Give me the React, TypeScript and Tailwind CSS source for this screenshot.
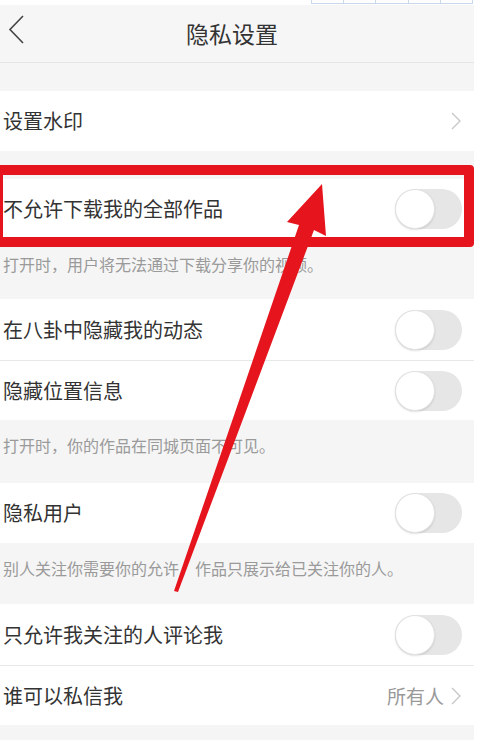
import React from "react";

function Toggle() {
  return (
    <div className="relative w-[67px] h-[40px] rounded-full bg-[#e6e6e6] shrink-0">
      <div className="absolute left-0 top-0 w-[40px] h-[40px] rounded-full bg-white border border-[#e2e2e2] shadow-[0_1px_2px_rgba(0,0,0,0.12)]" />
    </div>
  );
}

function Chevron() {
  return (
    <svg width="12" height="20" viewBox="0 0 12 20" className="shrink-0">
      <path d="M2 2 L10 10 L2 18" fill="none" stroke="#c8c8c8" strokeWidth="1.4" />
    </svg>
  );
}

function Row({
  label,
  right,
  divider,
  h = "h-[60px]",
}: {
  label: string;
  right: React.ReactNode;
  divider?: boolean;
  h?: string;
}) {
  return (
    <div className={`bg-white ${h} pl-[3px] pr-[12px] flex items-center justify-between ${divider ? "border-b border-[#e8e8e8]" : ""}`}>
      <span className="text-[20px] text-[#333] leading-none">{label}</span>
      {right}
    </div>
  );
}

function Desc({ text, h = "h-[60px]" }: { text: string; h?: string }) {
  return (
    <div className={`${h} pl-[3px] pt-[13px]`}>
      <span className="text-[16px] leading-[22px] text-[#9a9a9a]">{text}</span>
    </div>
  );
}

export default function App() {
  return (
    <div
      className="relative w-[500px] h-[740px] bg-white overflow-hidden"
      style={{ fontFamily: '"Noto Sans CJK SC", "Noto Sans", sans-serif' }}
    >
      <div className="h-[5px] bg-white flex">
        <div className="ml-[311px] w-[162px] h-[4px] flex border-b border-[#c9d8ea]">
          <div className="flex-1 border-l border-[#c9d8ea]" />
          <div className="flex-1 border-l border-[#c9d8ea]" />
          <div className="flex-1 border-l border-[#c9d8ea]" />
          <div className="flex-1 border-l border-[#c9d8ea]" />
          <div className="flex-1 border-l border-r border-[#c9d8ea]" />
        </div>
      </div>
      <div className="w-[474px] h-[735px] bg-[#f5f5f5] flex flex-col">
        <div className="h-[58px] bg-[#f6f6f6] border-b border-[#e6e6e6] flex items-center relative">
          <svg width="18" height="30" viewBox="0 0 18 30" className="absolute left-[8px] top-[10px]">
            <path d="M15 1 L2 14.5 L15 28" fill="none" stroke="#444" strokeWidth="1.6" />
          </svg>
          <div className="flex-1 text-center text-[23px] text-[#333] pl-[-10px] leading-none pr-[10px]">隐私设置</div>
        </div>
        <div className="h-[28px]" />
        <Row label="设置水印" right={<Chevron />} />
        <div className="h-[28px]" />
        <Row label="不允许下载我的全部作品" right={<Toggle />} />
        <Desc text="打开时，用户将无法通过下载分享你的视频。" />
        <Row label="在八卦中隐藏我的动态" right={<Toggle />} divider h="h-[62px]" />
        <Row label="隐藏位置信息" right={<Toggle />} h="h-[59px]" />
        <Desc text="打开时，你的作品在同城页面不可见。" h="h-[63px]" />
        <Row label="隐私用户" right={<Toggle />} />
        <Desc text="别人关注你需要你的允许，作品只展示给已关注你的人。" h="h-[61px]" />
        <Row label="只允许我关注的人评论我" right={<Toggle />} divider h="h-[62px]" />
        <Row
          label="谁可以私信我"
          right={
            <div className="flex items-center gap-[6px]">
              <span className="text-[19px] text-[#999] leading-none">所有人</span>
              <Chevron />
            </div>
          }
          h="h-[59px]"
        />
      </div>

      <div className="absolute top-[165px] left-[-7px] w-[481px] h-[82px] border-[10px] border-[#e6141c] rounded-[4px]" />

      <svg className="absolute left-0 top-0" width="500" height="740" viewBox="0 0 500 740">
        <polygon
          points="322,184 326,236 314,230 178,592 174,591 299,225 287,222"
          fill="#e6141c"
        />
      </svg>
    </div>
  );
}
